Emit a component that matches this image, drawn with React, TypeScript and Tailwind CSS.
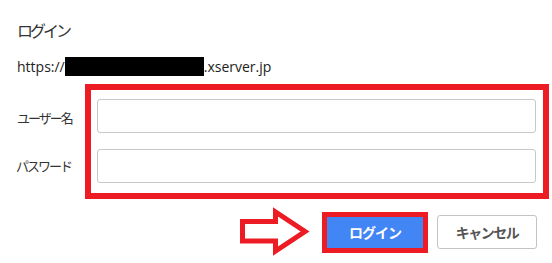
export default function App() {
  return (
    <div
      className="w-[552px] h-[263px] bg-white pl-4 pt-[21px] text-[#333]"
      style={{ fontFamily: '"Open Sans", "Noto Sans CJK JP", sans-serif' }}
    >
      <h1 className="text-[16px] leading-5 tracking-[-3px] font-normal ml-[1px]">ログイン</h1>

      <div className="mt-4 h-5 flex items-start text-[14px] leading-5 text-[#222]">
        <span className="ml-[1px]">https://</span>
        <span className="inline-block w-[139px] h-[19px] bg-black" />
        <span>.xserver.jp</span>
      </div>

      <div className="mt-[7px] flex">
        <div className="w-[69px] flex flex-col gap-4 pt-[15px] text-[13px] tracking-[-2px]">
          <div className="h-[34px] flex items-center pt-[5px] ml-[1px]">ユーザー名</div>
          <div className="h-[34px] flex items-center pt-[1px]">パスワード</div>
        </div>
        <div className="w-[464px] h-[115px] border-[6px] border-[#ed1c24] pt-[9px] pl-[6px] pr-[7px] flex flex-col gap-4">
          <input className="h-[34px] w-full rounded-[3px] border border-[#c8c8c8] bg-white outline-none" />
          <input
            type="password"
            className="h-[34px] w-full rounded-[3px] border border-[#c8c8c8] bg-white outline-none"
          />
        </div>
      </div>

      <div className="mt-2 flex items-center h-[50px]">
        <svg className="ml-[221px] shrink-0" width="76" height="50" viewBox="0 0 76 50">
          <path
            d="M5.5 14.5 H38.5 V5 L68 24.5 L38.5 44 V34 H5.5 Z"
            fill="#fff"
            stroke="#ed1c24"
            strokeWidth="5"
            strokeLinejoin="miter"
          />
        </svg>
        <div className="ml-[9px] border-[5px] border-[#ed1c24]">
          <button className="w-[96px] h-[31px] bg-[#4285f4] text-white text-[14px] font-bold tracking-[-1px] flex items-center justify-center">
            ログイン
          </button>
        </div>
        <button className="ml-[9px] w-[100px] h-[34px] rounded-[3px] border border-[#c4c4c4] bg-white text-[#555] text-[14px] font-bold tracking-[-1.5px] flex items-center justify-center">
          キャンセル
        </button>
      </div>
    </div>
  )
}
